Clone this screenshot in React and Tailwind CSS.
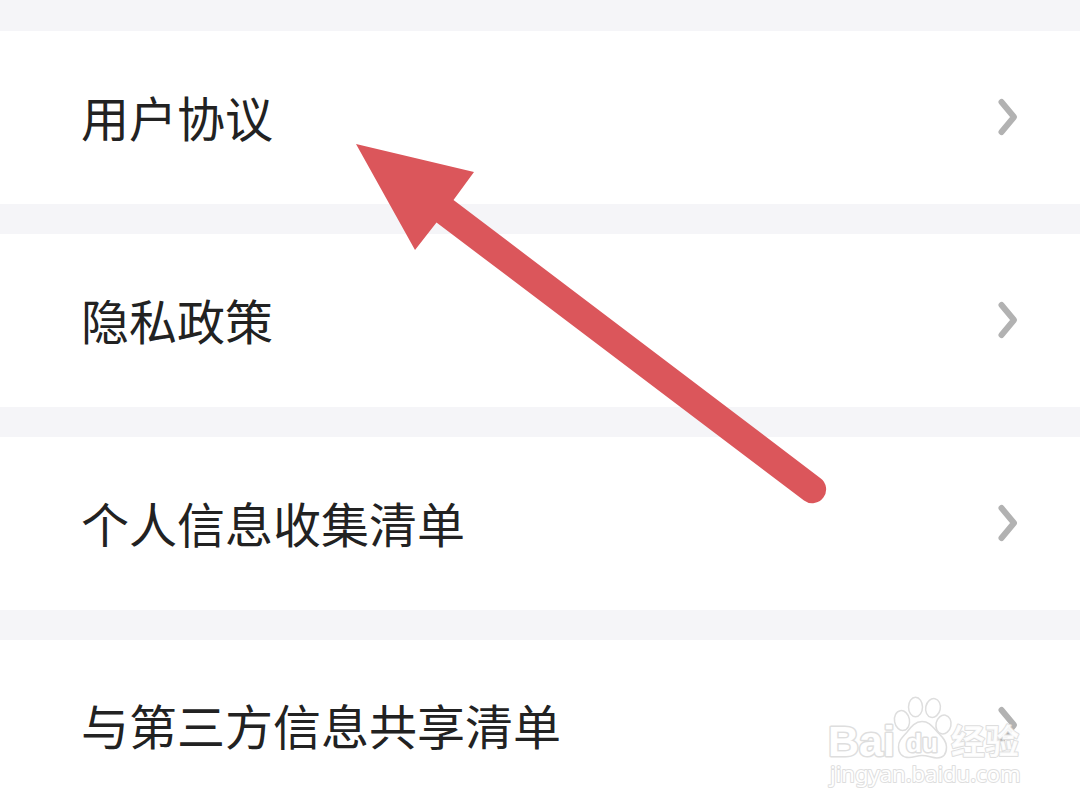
const items = ['用户协议', '隐私政策', '个人信息收集清单', '与第三方信息共享清单'];

function Chevron() {
  return (
    <svg
      className="h-10 w-6 shrink-0"
      viewBox="0 0 24 40"
      fill="none"
      stroke="#b2b2b2"
      strokeWidth="6"
      strokeLinecap="round"
      strokeLinejoin="round"
      aria-hidden="true"
    >
      <path d="M4.500 5 L17 20 L4.500 35" />
    </svg>
  );
}

function Arrow() {
  return (
    <svg
      className="pointer-events-none absolute left-[356px] top-[144px] h-[360px] w-[472px]"
      viewBox="356 144 472 360"
      aria-hidden="true"
    >
      <path
        fill="#db565b"
        d="M356 144 L474 172 L453.500 200 L820.500 478.200 A13.800 13.800 0 0 1 804 500.500 L436.500 222.500 L415 250 Z"
      />
    </svg>
  );
}

function Watermark() {
  return (
    <svg
      className="pointer-events-none absolute bottom-5 right-[52px] h-24 w-52"
      viewBox="820 696 208 96"
      fill="#ffffff"
      stroke="#dedede"
      strokeLinejoin="round"
      role="img"
      aria-label="Baidu 经验"
    >
      <g strokeWidth="1.500">
        <ellipse cx="902" cy="720.500" rx="7.500" ry="10" transform="rotate(-10 902 720.500)" />
        <ellipse cx="915.500" cy="707" rx="7" ry="9.800" />
        <ellipse cx="933" cy="708" rx="7.300" ry="9.500" transform="rotate(12 933 708)" />
        <ellipse cx="943.500" cy="724.500" rx="7.500" ry="9.500" transform="rotate(12 943.500 724.500)" />
        <path d="M922 721.500 C915 721.500 911 727 907.500 731.500 C903 737 898.500 740 898.500 747 C898.500 754 903 757.500 909 757.500 C914 757.500 917 755.500 922 755.500 C928 755.500 932 758 937 758 C943 758 946.500 754 946.500 747 C946.500 740 941 736 936.500 731 C932 726 929 721.500 922 721.500 Z" />
      </g>
      <g className="font-['Liberation_Sans',sans-serif] font-bold" strokeWidth="3" paintOrder="stroke">
        <text x="828" y="756" fontSize="43">Bai</text>
        <text x="906" y="752" fontSize="26">du</text>
      </g>
      <text
        className="font-['Noto_Sans_CJK_SC',sans-serif] font-bold"
        x="951"
        y="754"
        fontSize="34"
        strokeWidth="2"
        paintOrder="stroke"
        fillOpacity="0.9"
      >
        经验
      </text>
      <text
        className="font-['Noto_Sans',sans-serif]"
        x="830"
        y="782"
        fontSize="22"
        strokeWidth="2"
        paintOrder="stroke"
      >
        jingyan.baidu.com
      </text>
    </svg>
  );
}

export default function App() {
  return (
    <main className="relative min-h-screen bg-[#f5f5f8] pt-[31px] font-['Noto_Sans_CJK_SC',sans-serif] text-[#222222]">
      <ul className="flex flex-col gap-[30px]">
        {items.map((label) => (
          <li key={label} className="h-[173px] bg-white last:h-[172px]">
            <a
              href="#"
              className="flex h-full items-center justify-between pb-[2px] pl-[81px] pr-[59px] text-[48px] leading-[64px]"
            >
              <span className="pb-[2px]">{label}</span>
              <Chevron />
            </a>
          </li>
        ))}
      </ul>
      <Arrow />
      <Watermark />
    </main>
  );
}
